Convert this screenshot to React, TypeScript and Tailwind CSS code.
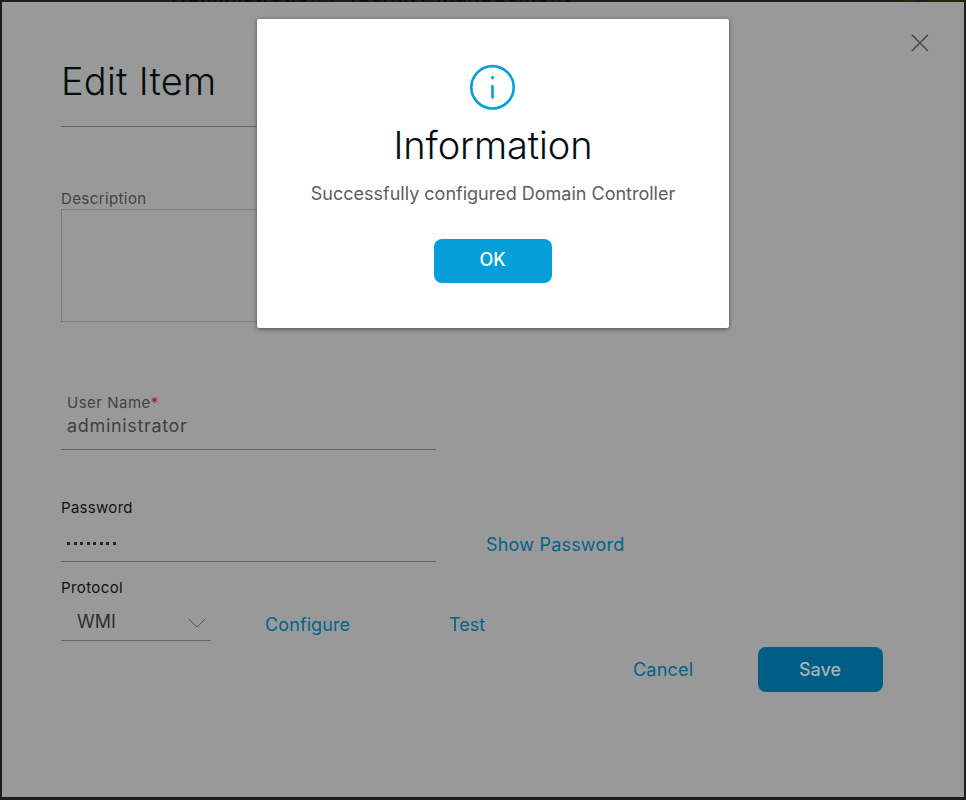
import type { ReactNode } from 'react';

const Label = ({ children, className = '' }: { children: ReactNode; className?: string }) => (
  <label className={`block h-5 whitespace-nowrap text-[15px] leading-5 ${className}`}>{children}</label>
);

const LinkButton = ({ children, className = '' }: { children: ReactNode; className?: string }) => (
  <button className={`block h-6 whitespace-nowrap text-left text-[18px] leading-6 text-[#00648b] ${className}`}>{children}</button>
);

function EditItemPanel() {
  return (
    <main className="flex h-[795px] w-[962px] flex-col bg-[#999999] pl-[59px]">
      <header className="flex h-[125px] w-[375px] items-start border-b border-[#676767]">
        <h1 className="mt-[55px] h-12 whitespace-nowrap text-[38px] font-light leading-[48px] tracking-[0.25px] text-[#030c10]">Edit Item</h1>
      </header>
      <button aria-label="Close" className="absolute left-[910px] top-[33px]">
        <svg width="20" height="20" viewBox="0 0 20 20" fill="none" stroke="#444" strokeWidth="1.4">
          <path d="M1.8 1.8 18 18M18 1.8 1.8 18" />
        </svg>
      </button>
      <Label className="mt-[62px] tracking-[0.4px] text-[#434344]">Description</Label>
      <div className="h-[113px] w-[375px] border border-[#7b7b7b]" />
      <Label className="mt-[71px] pl-[6px] tracking-[0.5px] text-[#434344]">
        User Name<span className="text-[#a02018]">*</span>
      </Label>
      <div className="h-[37px] w-[375px] border-b border-[#676767] pl-[6px] pt-px text-[18px] leading-6 tracking-[0.67px] text-[#404041]">administrator</div>
      <Label className="mt-[48px] tracking-[0.3px] text-[#111]">Password</Label>
      <div className="flex h-[44px]">
        <div className="flex w-[375px] items-start gap-[3.5px] border-b border-[#676767] pl-[6px] pt-[24px]">
          {Array.from({ length: 8 }, (_, i) => (
            <i key={i} className="h-[3px] w-[3px] bg-[#20262e]" />
          ))}
        </div>
        <LinkButton className="ml-[50px] mt-[15px] tracking-[0.2px]">Show Password</LinkButton>
      </div>
      <Label className="mt-[16px] tracking-[0.4px] text-[#111]">Protocol</Label>
      <div className="flex h-[43px]">
        <div className="flex w-[150px] items-start justify-between border-b border-[#676767] pl-4 pr-[5px] pt-[12px] text-[18px] leading-6 text-[#2c2d2e]">
          WMI
          <svg className="mt-2" width="18" height="10" viewBox="0 0 18 10" fill="none" stroke="#555" strokeWidth="1">
            <path d="M.5.7 9 9 17.5.7" />
          </svg>
        </div>
        <LinkButton className="ml-[54px] mt-[15px] w-[184px] tracking-[0.1px]">Configure</LinkButton>
        <LinkButton className="mt-[15px]">Test</LinkButton>
      </div>
      <footer className="mt-[6px] flex h-[45px] items-center">
        <LinkButton className="ml-[572px] w-[125px] tracking-[0.2px]">Cancel</LinkButton>
        <button className="h-[45px] w-[125px] rounded-lg bg-[#005d84] pr-px text-[18px] font-medium text-[#a9b1b5]">Save</button>
      </footer>
    </main>
  );
}

function InformationDialog() {
  return (
    <section role="dialog" className="absolute left-[257px] top-[19px] flex h-[309px] w-[472px] flex-col items-center rounded-[2px] bg-white pt-[45px] shadow-[0_1px_4px_rgba(0,0,0,0.5)]">
      <svg width="46" height="46" viewBox="0 0 46 46" fill="none" stroke="#049fd9">
        <circle cx="22.5" cy="23.3" r="21.2" strokeWidth="2.6" />
        <path d="M22.5 13.1v1.2M22.5 22v11.4" strokeWidth="2.6" strokeLinecap="round" />
      </svg>
      <h2 className="mt-[11px] whitespace-nowrap text-[38px] font-light leading-[48px] tracking-[-0.1px] text-[#030c10]">Information</h2>
      <p className="mt-[13px] whitespace-nowrap text-[18px] leading-6 text-[#5d5d60]">Successfully configured Domain Controller</p>
      <button className="mt-[33px] h-[44px] w-[118px] rounded-lg bg-[#049fd9] pb-[3px] pr-px text-[18px] font-medium text-white">OK</button>
    </section>
  );
}

export default function App() {
  return (
    <div className="relative h-[800px] w-[966px] overflow-hidden bg-[#1e1c1c] px-[2px] pt-[2px] font-['Inter','Liberation_Sans',sans-serif]">
      <div className="absolute left-0 top-0 h-[2px] w-full overflow-hidden">
        <div className="absolute left-[172px] top-[-19px] whitespace-nowrap text-[20px] leading-[28px] tracking-[1.05px] text-[#090909]">Administration &gt; Identity Management</div>
        <div className="absolute left-[902px] top-0 h-[2px] w-[14px] bg-[#2b2208]" />
        <div className="absolute left-[930px] top-0 h-[2px] w-[36px] bg-[#2b2208]" />
      </div>
      <EditItemPanel />
      <InformationDialog />
    </div>
  );
}
